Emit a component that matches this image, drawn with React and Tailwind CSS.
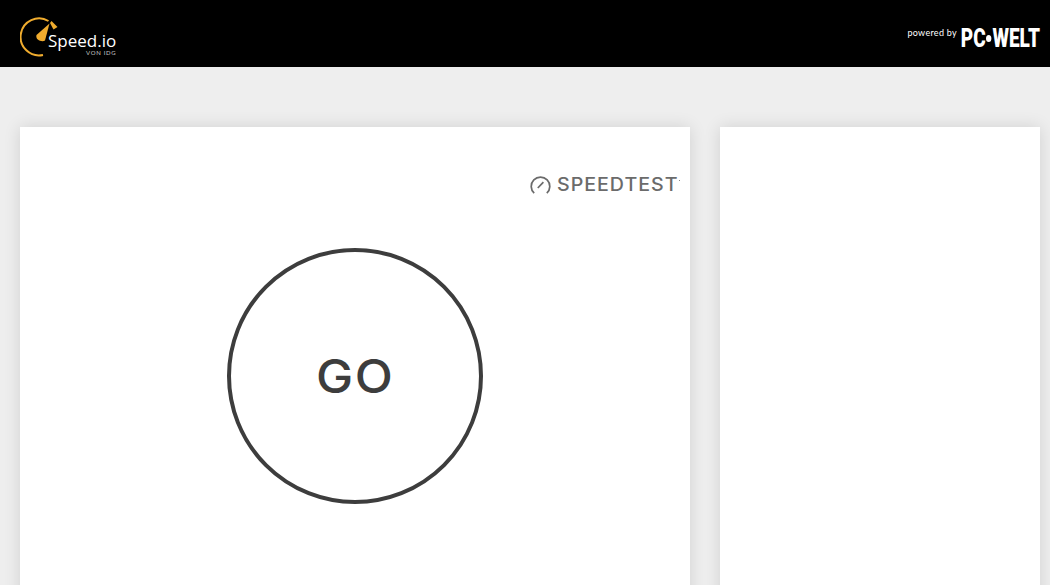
const SpeedLogo = () => (
  <div className="flex w-[100px] h-[46px] relative">
    <svg width="44" height="46" viewBox="0 0 44 46" className="absolute left-0 top-0">
      <path d="M23 44 A18.5 18.5 0 1 1 28.5 10" fill="none" stroke="#f0ac2e" strokeWidth="2" />
      <path d="M16.5 24 L29.5 12.5 L25 29.5 C22 31.5 15 29 16.5 24 Z" fill="#f0ac2e" />
      <path d="M30 12 L31.5 10 L37.5 16 L33.5 18.5 Z" fill="#f0ac2e" />
    </svg>
    <span className="absolute left-[28px] top-[21px] text-[17px] leading-[17px] text-white font-['Open_Sans',sans-serif]">
      Speed.io
    </span>
    <span className="absolute left-[66px] top-[39px] text-[6px] leading-[6px] tracking-[0.7px] text-[#c8c8c8] font-['Lato',sans-serif]">
      VON IDG
    </span>
  </div>
);

const PcWelt = () => (
  <div className="flex items-center">
    <span className="text-[9px] leading-[10px] tracking-[0.3px] text-white mr-[3px] mb-[1px] font-['Lato',sans-serif]">
      powered by
    </span>
    <span className="w-[80px] mt-[10px] flex items-center justify-end origin-right scale-x-[0.76] whitespace-nowrap text-[25px] leading-[24px] font-black text-white font-['Roboto',sans-serif]">
      <span>PC</span>
      <span className="w-[7px] h-[7px] shrink-0 rounded-full bg-white mx-[1px]"></span>
      <span>WELT</span>
    </span>
  </div>
);

const SpeedtestLogo = () => (
  <div className="flex items-center gap-[6px] text-[#6b6b6b]">
    <svg width="21" height="20" viewBox="0 0 21 20">
      <path d="M4.2 18.2 A9.3 9.3 0 1 1 16.8 18.2" fill="none" stroke="currentColor" strokeWidth="1.7" />
      <path d="M7.8 13 L13.4 7.2" fill="none" stroke="currentColor" strokeWidth="1.7" />
    </svg>
    <span className="w-[121px] origin-left scale-x-[1.09] whitespace-nowrap text-[18px] leading-[20px] tracking-[0.9px] font-medium font-['Inter',sans-serif]">
      SPEEDTEST
    </span>
    <span className="w-[1px] h-[1px] bg-[#888] -ml-[5px] mb-[9px]"></span>
  </div>
);

export default function App() {
  return (
    <div className="h-[585px] overflow-hidden bg-[#eeeeee]">
      <header className="h-[67px] bg-black flex items-center justify-between pl-[20px] pr-[10px]">
        <SpeedLogo />
        <PcWelt />
      </header>
      <main className="flex gap-[30px] pt-[60px] pl-[20px] pr-[10px]">
        <section className="w-[670px] h-[520px] bg-white shadow-[0_0_16px_rgba(0,0,0,0.12)] flex flex-col pt-[48px] pr-[10px]">
          <div className="flex justify-end">
            <SpeedtestLogo />
          </div>
          <div className="flex justify-center pl-[10px] pt-[53px]">
            <button className="w-[256px] h-[256px] rounded-full border-[4px] border-[#3d3d3d] flex items-center justify-center text-[#3d3d3d] text-[46px] leading-none font-medium font-['Inter',sans-serif]">
              <span className="scale-x-[1.08] tracking-[1.5px]">GO</span>
            </button>
          </div>
        </section>
        <aside className="w-[320px] h-[520px] bg-white shadow-[0_0_16px_rgba(0,0,0,0.12)]"></aside>
      </main>
    </div>
  );
}
